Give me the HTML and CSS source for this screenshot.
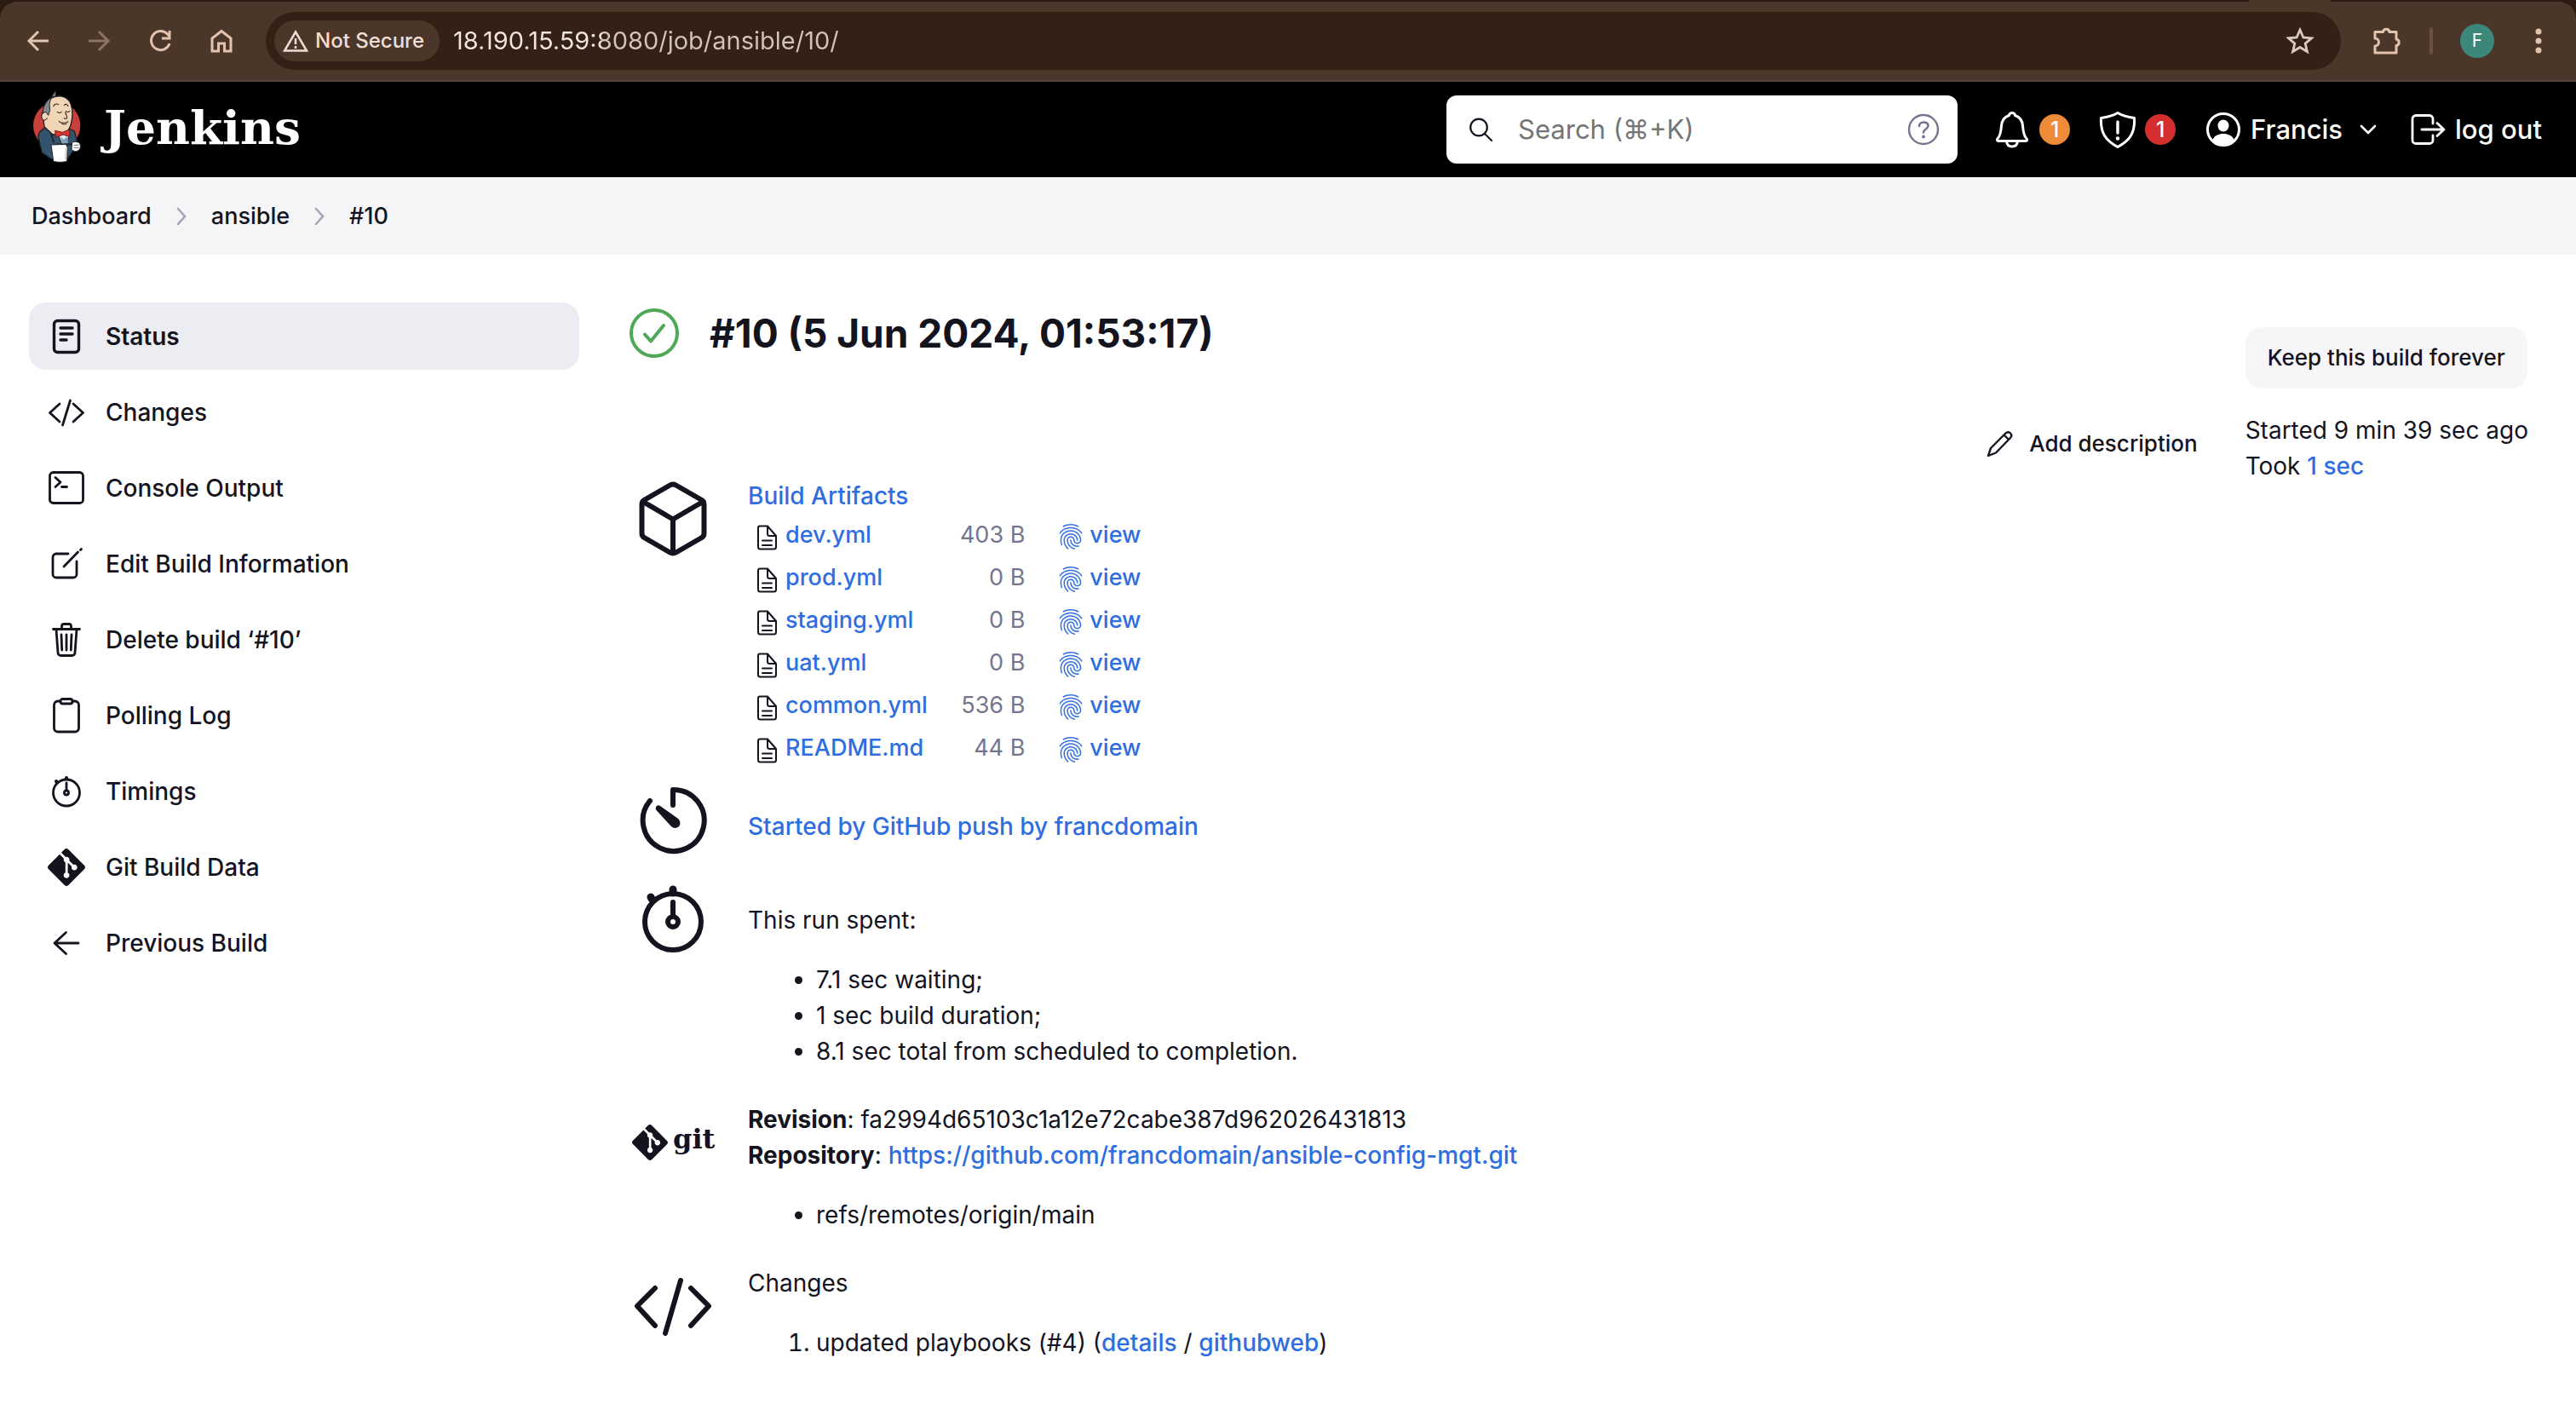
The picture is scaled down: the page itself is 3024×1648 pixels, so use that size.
FILE: index.html
```html
<!DOCTYPE html>
<html lang="en">
<head>
<meta charset="utf-8">
<title>ansible #10 [Jenkins]</title>
<link rel="stylesheet" href="styles.css">
</head>
<body>
<svg class="sprite" aria-hidden="true">
  <symbol id="i-file" viewBox="0 0 32 32"><path d="M8 2.500h9L27 14v13a2.500 2.500 0 0 1-2.500 2.500h-16A2.500 2.500 0 0 1 6 27V4.500a2 2 0 0 1 2-2zM17 3v8.500a2.500 2.500 0 0 0 2.500 2.500H27M11 19.500h11M11 25h11" fill="none" stroke="currentColor" stroke-width="2" stroke-linecap="round" stroke-linejoin="round"/></symbol>
  <symbol id="i-finger" viewBox="0 0 24 24"><path fill="currentColor" d="M17.81,4.47C17.73,4.47 17.65,4.45 17.58,4.41C15.66,3.42 14,3 12,3C10.03,3 8.15,3.47 6.44,4.41C6.2,4.54 5.9,4.45 5.76,4.21C5.63,3.97 5.72,3.66 5.96,3.53C7.82,2.5 9.86,2 12,2C14.14,2 16,2.47 18.04,3.5C18.29,3.65 18.38,3.95 18.25,4.19C18.16,4.37 18,4.47 17.81,4.47M3.5,9.72C3.4,9.72 3.3,9.69 3.21,9.63C3,9.47 2.93,9.16 3.09,8.93C4.08,7.53 5.34,6.43 6.84,5.66C10,4.04 14,4.03 17.15,5.65C18.65,6.42 19.91,7.5 20.9,8.9C21.06,9.12 21,9.44 20.78,9.6C20.55,9.76 20.24,9.71 20.08,9.5C19.18,8.22 18.04,7.23 16.69,6.54C13.82,5.07 10.15,5.07 7.29,6.55C5.93,7.25 4.79,8.25 3.89,9.5C3.81,9.65 3.66,9.72 3.5,9.72M9.75,21.79C9.62,21.79 9.5,21.74 9.4,21.64C8.53,20.77 8.06,20.21 7.39,19C6.7,17.77 6.34,16.27 6.34,14.66C6.34,11.69 8.88,9.27 12,9.27C15.12,9.27 17.66,11.69 17.66,14.66A0.5,0.5 0 0,1 17.16,15.16A0.5,0.5 0 0,1 16.66,14.66C16.66,12.24 14.57,10.27 12,10.27C9.43,10.27 7.34,12.24 7.34,14.66C7.34,16.1 7.66,17.43 8.27,18.5C8.91,19.66 9.35,20.15 10.12,20.93C10.31,21.13 10.31,21.44 10.12,21.64C10,21.74 9.88,21.79 9.75,21.79M16.92,19.94C15.73,19.94 14.68,19.64 13.82,19.05C12.33,18.04 11.44,16.4 11.44,14.66A0.5,0.5 0 0,1 11.94,14.16A0.5,0.5 0 0,1 12.44,14.66C12.44,16.07 13.16,17.4 14.38,18.22C15.09,18.7 15.92,18.93 16.92,18.93C17.16,18.93 17.56,18.9 17.96,18.83C18.23,18.78 18.5,18.96 18.54,19.24C18.59,19.5 18.41,19.77 18.13,19.82C17.56,19.93 17.06,19.94 16.92,19.94M14.91,22C14.87,22 14.82,22 14.78,22C13.19,21.54 12.15,20.95 11.06,19.88C9.66,18.5 8.89,16.64 8.89,14.66C8.89,13.04 10.27,11.72 11.97,11.72C13.67,11.72 15.05,13.04 15.05,14.66C15.05,15.73 16,16.6 17.13,16.6C18.28,16.6 19.21,15.73 19.21,14.66C19.21,10.89 15.96,7.83 11.96,7.83C9.12,7.83 6.5,9.41 5.35,11.86C4.96,12.67 4.76,13.62 4.76,14.66C4.76,15.44 4.83,16.67 5.43,18.27C5.53,18.53 5.4,18.82 5.14,18.91C4.88,19 4.59,18.87 4.5,18.62C4,17.31 3.77,16 3.77,14.66C3.77,13.46 4,12.37 4.45,11.42C5.78,8.63 8.73,6.82 11.96,6.82C16.5,6.82 20.21,10.33 20.21,14.65C20.21,16.27 18.83,17.59 17.13,17.59C15.43,17.59 14.05,16.27 14.05,14.65C14.05,13.58 13.12,12.71 11.97,12.71C10.82,12.71 9.89,13.58 9.89,14.65C9.89,16.36 10.55,17.96 11.76,19.16C12.71,20.1 13.62,20.62 15.03,21C15.3,21.08 15.45,21.36 15.38,21.62C15.33,21.85 15.12,22 14.91,22Z"/></symbol>
  <symbol id="i-git" viewBox="0 0 24 24"><path fill="currentColor" d="M23.546 10.93L13.067.452c-.604-.603-1.582-.603-2.188 0L8.708 2.627l2.76 2.76c.645-.215 1.379-.07 1.889.441.516.515.658 1.258.438 1.9l2.658 2.66c.645-.223 1.387-.078 1.9.435.721.72.721 1.884 0 2.604-.719.719-1.881.719-2.6 0-.539-.541-.674-1.337-.404-1.996L12.86 8.955v6.525c.176.086.342.203.488.348.713.721.713 1.883 0 2.6-.719.721-1.889.721-2.609 0-.719-.719-.719-1.879 0-2.598.182-.18.387-.316.605-.406V8.835c-.217-.091-.424-.222-.6-.401-.545-.545-.676-1.342-.396-2.009L7.636 3.7.45 10.881c-.6.605-.6 1.584 0 2.189l10.48 10.477c.604.604 1.582.604 2.186 0l10.43-10.43c.605-.603.605-1.582 0-2.187"/></symbol>
  <symbol id="i-code" viewBox="0 0 96 96"><path d="M27 27L6 48l21 23M69 27l21 21-21 23M57 18L39 80" fill="none" stroke="currentColor" stroke-width="6" stroke-linecap="round" stroke-linejoin="round"/></symbol>
  <symbol id="i-watch" viewBox="0 0 96 96"><g fill="none" stroke="currentColor" stroke-linecap="round"><circle cx="48" cy="51" r="33" stroke-width="6"/><circle cx="48" cy="51" r="6" stroke-width="6"/><path d="M48 44V28" stroke-width="6"/><path d="M48 17v-4M23 24l-1-2" stroke-width="9"/></g></symbol>
</svg>

<div class="browser">
  <div class="tabstrip"><span class="tab-foot"></span></div>
  <div class="toolbar">
    <div class="nav-buttons">
      <button class="tool" aria-label="Back"><svg width="30" height="30" viewBox="0 0 30 30"><path d="M27 15H4M15 4L4 15l11 11" fill="none" stroke="currentColor" stroke-width="3"/></svg></button>
      <button class="tool tool-off" aria-label="Forward"><svg width="30" height="30" viewBox="0 0 30 30"><path d="M2 15h23M14 4l11 11-11 11" fill="none" stroke="currentColor" stroke-width="3"/></svg></button>
      <button class="tool" aria-label="Reload"><svg width="30" height="30" viewBox="0 0 30 30"><path d="M25 18a11 11 0 1 1-2.500-11l3 3M25 3v9h-9" fill="none" stroke="currentColor" stroke-width="3"/></svg></button>
      <button class="tool" aria-label="Home"><svg width="30" height="30" viewBox="0 0 30 30"><path d="M3 12L14 3.500 25 12v15h-7.500v-9h-7v9H3z" fill="none" stroke="currentColor" stroke-width="3"/></svg></button>
    </div>
    <div class="omnibox">
      <button class="chip"><svg width="30" height="30" viewBox="0 0 30 30"><path d="M15 4.500L28 26.500H2z" fill="none" stroke="currentColor" stroke-width="2.500"/><path d="M15 12v7M15 21v3" stroke="currentColor" stroke-width="2.500"/></svg>Not Secure</button>
      <input class="url" type="text" aria-label="Address" value="18.190.15.59:8080/job/ansible/10/">
      <button class="star" aria-label="Bookmark"><svg width="34" height="34" viewBox="0 0 34 34"><path d="M16 4l3.900 9 9.600.8-7.300 6.300 2.200 9.400L16 24.500l-8.400 5 2.200-9.400-7.300-6.300 9.600-.8z" fill="none" stroke="currentColor" stroke-width="2.800"/></svg></button>
    </div>
    <div class="tools-right">
      <button class="tool" aria-label="Extensions"><svg width="36" height="36" viewBox="0 0 36 36"><path d="M4 7.500h9.500a3.800 3.800 0 0 1 7.500 0h8V16a3.800 3.800 0 0 1 0 7.500V32H4v-8a4.500 4.500 0 0 0 0-9z" fill="none" stroke="currentColor" stroke-width="3" stroke-linejoin="round"/></svg></button>
      <span class="divider"></span>
      <button class="avatar" aria-label="Profile">F</button>
      <button class="tool" aria-label="Menu"><svg width="8" height="36" viewBox="0 0 8 36"><g fill="currentColor"><circle cx="4" cy="7" r="3.500"/><circle cx="4" cy="18" r="3.500"/><circle cx="4" cy="29" r="3.500"/></g></svg></button>
    </div>
  </div>
</div>

<header class="page-header">
  <a class="brand" href="#">
    <svg width="70" height="96" viewBox="0 0 210 288" aria-hidden="true">
      <circle cx="92" cy="130" r="83" fill="#c9403a"/>
      <path d="M50 138L32 152 26 168l14 58 32 22h58l20-30 14-30-10-38-30-14z" fill="#33526b" stroke="#1c2024" stroke-width="4"/>
      <path d="M62 42C52 52 42 74 43 86c-6 4-6 18 2 22l3 26 30 28 48-4 14-26C150 100 148 76 142 56 134 32 108 22 88 28 76 30 68 36 62 42z" fill="#f0d6b7" stroke="#1c2024" stroke-width="4"/>
      <path d="M88 27C66 28 44 54 42 86l12-4 8 12 6-18-2-20c2-16 10-32 22-49z" fill="#85888b" stroke="#1c2024" stroke-width="3"/>
      <path d="M42 88c-6 6-4 22 6 24l12-8" fill="#f0d6b7" stroke="#1c2024" stroke-width="3"/>
      <path d="M80 62c4-8 12-10 18-6M118 58c6-6 12-2 14 4M94 82c4 4 10 4 14 0M124 80c4 4 10 3 13-1M122 84c2 8 8 16 6 20-4 4-8 2-10 0M100 116c10 6 22 6 32 0M110 124c6 3 12 2 16 0" fill="none" stroke="#3a2c22" stroke-width="3.500" stroke-linecap="round"/>
      <path d="M96 160l14 36 18-6 10-30-20-6z" fill="#dfe9f0" stroke="#1c2024" stroke-width="3"/>
      <path d="M104 168l12 12 14-12 2 24-20 4z" fill="#7d9db5"/>
      <path d="M86 148l26 6 24-10 2 26-24-8-26 10z" fill="#d33833" stroke="#7a1a18" stroke-width="3"/>
      <path d="M72 160l10 30M84 196h62" stroke="#1c2024" stroke-width="5"/>
      <path d="M146 190c8-6 26-2 28 6s2 16-6 22c-10 6-20 2-24-6z" fill="#fff" stroke="#1c2024" stroke-width="3"/>
      <path d="M152 200l18-2M152 208l18 0" stroke="#1c2024" stroke-width="2"/>
      <path d="M72 198l52-2 6 12-2 48c-14 4-34 4-48 0z" fill="#fff" stroke="#1c2024" stroke-width="3"/>
      <path d="M124 210l-2 42" stroke="#b9c0c6" stroke-width="3"/>
    </svg>
    <span class="wordmark">Jenkins</span>
  </a>
  <div class="header-tools">
    <form class="search">
      <svg width="32" height="32" viewBox="0 0 32 32"><circle cx="14" cy="13.500" r="9.800" fill="none" stroke="#14141f" stroke-width="2.200"/><path d="M21 21l8 8" stroke="#14141f" stroke-width="2.200" stroke-linecap="round"/></svg>
      <input type="search" aria-label="Search" placeholder="Search (⌘+K)">
      <a href="#" class="help" aria-label="Help"><svg width="40" height="40" viewBox="0 0 40 40"><circle cx="20" cy="20" r="17" fill="none" stroke="currentColor" stroke-width="2.400"/><path d="M15 16c0-6 10.500-6 10.500-.5 0 4-5.500 4-5.500 8" fill="none" stroke="currentColor" stroke-width="2.600" stroke-linecap="round"/><circle cx="20" cy="28.500" r="2" fill="currentColor"/></svg></a>
    </form>
    <div class="header-links">
      <a class="alert" href="#" aria-label="Notifications"><svg width="44" height="44" viewBox="0 0 44 44"><path d="M22 2.500c-2 0-3.500 1.300-3.500 3-6 2-8.500 6-9 12-.7 9-1.500 12-4 14.500-2 2-1 3.500.5 3.500h32c1.500 0 2.500-1.500.5-3.500-2.500-2.500-3.300-5.500-4-14.500-.5-6-3-10-9-12 0-1.700-1.500-3-3.500-3zM15.500 36c.5 4 3 6 6.500 6s6-2 6.500-6" fill="none" stroke="currentColor" stroke-width="3" stroke-linejoin="round"/></svg><span class="badge badge-warn">1</span></a>
      <a class="alert" href="#" aria-label="Security warnings"><svg width="44" height="44" viewBox="0 0 44 44"><path d="M22 2.500C17 5.500 10 7.500 2.500 8.500c-1 17 5 26.500 19.500 34 14.500-7.500 20.500-17 19.500-34C34 7.500 27 5.500 22 2.500z" fill="none" stroke="currentColor" stroke-width="3" stroke-linejoin="round"/><path d="M22 13v13" stroke="currentColor" stroke-width="3.400" stroke-linecap="round"/><circle cx="22" cy="32.500" r="2.200" fill="currentColor"/></svg><span class="badge badge-danger">1</span></a>
      <span class="user"><a class="alert" href="#"><svg width="44" height="44" viewBox="0 0 44 44"><circle cx="22" cy="22" r="18.500" fill="none" stroke="currentColor" stroke-width="3"/><ellipse cx="22" cy="17.500" rx="6.500" ry="7" fill="currentColor"/><path d="M9.500 34c2-5 7-7 12.500-7s10.500 2 12.500 7c-3 4-8 6.500-12.500 6.500S12.500 38 9.500 34z" fill="currentColor"/></svg>Francis</a>
      <button class="caret" aria-label="User menu"><svg width="20" height="20" viewBox="0 0 20 20"><path d="M2 6l8 8 8-8" fill="none" stroke="currentColor" stroke-width="2.600" stroke-linecap="round" stroke-linejoin="round"/></svg></button></span>
      <a class="alert" href="#"><svg width="44" height="44" viewBox="0 0 44 44"><path d="M28 15V9.500a4 4 0 0 0-4-4H8a4 4 0 0 0-4 4v25a4 4 0 0 0 4 4h16a4 4 0 0 0 4-4V29M15 22h25M33 14.500l8 7.500-8 7.500" fill="none" stroke="currentColor" stroke-width="2.800" stroke-linecap="round" stroke-linejoin="round"/></svg>log out</a>
    </div>
  </div>
</header>

<nav class="crumbs" aria-label="Breadcrumb">
  <a href="#">Dashboard</a>
  <svg width="12" height="22" viewBox="0 0 12 22"><path d="M2 2l8 9-8 9" fill="none" stroke="currentColor" stroke-width="2.600" stroke-linecap="round"/></svg>
  <a href="#">ansible</a>
  <svg width="12" height="22" viewBox="0 0 12 22"><path d="M2 2l8 9-8 9" fill="none" stroke="currentColor" stroke-width="2.600" stroke-linecap="round"/></svg>
  <a href="#">#10</a>
</nav>

<div class="page-body">
  <nav class="tasks" aria-label="Build">
    <a class="task task-active" href="#"><svg viewBox="0 0 44 44"><g fill="none" stroke="currentColor" stroke-width="3.400" stroke-linecap="round"><rect x="7.500" y="3.500" width="29" height="37" rx="4"/><path d="M15 12h14M15 19h14M15 26h7"/></g></svg>Status</a>
    <a class="task" href="#"><svg viewBox="0 0 44 44"><path d="M14 12L2.500 22.500 14 33M30 12l11.500 10.500L30 33M26.500 8l-9 29" fill="none" stroke="currentColor" stroke-width="2.800" stroke-linecap="round" stroke-linejoin="round"/></svg>Changes</a>
    <a class="task" href="#"><svg viewBox="0 0 44 44"><g fill="none" stroke="currentColor" stroke-width="2.800" stroke-linecap="round" stroke-linejoin="round"><rect x="2.500" y="3.500" width="39" height="36" rx="4"/><path d="M9 9.500l6 5.500-6 5.500M16.500 20.500h6"/></g></svg>Console Output</a>
    <a class="task" href="#"><svg viewBox="0 0 44 44"><g fill="none" stroke="currentColor" stroke-width="2.800" stroke-linecap="round" stroke-linejoin="round"><path d="M24 10H10a4 4 0 0 0-4 4v20a4 4 0 0 0 4 4h20a4 4 0 0 0 4-4V19M19 25L35.500 8"/><path d="M38.500 5.500l1-1"/></g></svg>Edit Build Information</a>
    <a class="task" href="#"><svg viewBox="0 0 44 44"><g fill="none" stroke="currentColor" stroke-width="2.800" stroke-linecap="round" stroke-linejoin="round"><path d="M6.500 9.500h31M10 10l2 27a3.500 3.500 0 0 0 3.500 3.500h13A3.500 3.500 0 0 0 32 37l2-27M16.500 9V6a2.500 2.500 0 0 1 2.500-2.500h6A2.500 2.500 0 0 1 27.500 6v3M22 16v18M16 16l.7 18M28 16l-.7 18"/></g></svg>Delete build ‘#10’</a>
    <a class="task" href="#"><svg viewBox="0 0 44 44"><g fill="none" stroke="currentColor" stroke-width="2.800" stroke-linecap="round" stroke-linejoin="round"><path d="M15 5h-3a4.500 4.500 0 0 0-4.500 4.500v27A4.500 4.500 0 0 0 12 41h20a4.500 4.500 0 0 0 4.500-4.500v-27A4.500 4.500 0 0 0 32 5h-3"/><rect x="15" y="2.500" width="14" height="5.500" rx="2.500"/></g></svg>Polling Log</a>
    <a class="task" href="#"><svg viewBox="0 0 44 44"><g fill="none" stroke="currentColor" stroke-width="2.800" stroke-linecap="round"><circle cx="22" cy="23.500" r="15.500"/><circle cx="22" cy="23.500" r="2.500"/><path d="M22 20v-8"/><path d="M22 7V6M10.500 11l-.5-1" stroke-width="4"/></g></svg>Timings</a>
    <a class="task" href="#"><svg viewBox="0 0 44 44"><use href="#i-git"/></svg>Git Build Data</a>
    <a class="task" href="#"><svg viewBox="0 0 44 44"><path d="M21.500 9.500L8 22l13.500 12.500M8.500 22H36" fill="none" stroke="currentColor" stroke-width="2.800" stroke-linecap="round" stroke-linejoin="round"/></svg>Previous Build</a>
  </nav>

  <main class="content">
    <section class="summary">
      <h1><svg width="58" height="58" viewBox="0 0 58 58" aria-label="Success"><circle cx="29" cy="29" r="27" fill="none" stroke="#4fa856" stroke-width="4"/><path d="M18 30.500l7 8L40 20" fill="none" stroke="#4fa856" stroke-width="4" stroke-linecap="round" stroke-linejoin="round"/></svg>#10 (5 Jun 2024, 01:53:17)</h1>

      <div class="row">
        <svg class="row-icon" viewBox="0 0 96 96"><path d="M44.500 8.500L15 25.500a6 6 0 0 0-3.500 5.500v34a6 6 0 0 0 3.500 5.500l29.500 17a7 7 0 0 0 7 0l29.500-17a6 6 0 0 0 3.500-5.500V31a6 6 0 0 0-3.500-5.500l-29.500-17a7 7 0 0 0-7 0zM13 28l35 20.500L83 28M48 48.500V87" fill="none" stroke="currentColor" stroke-width="6" stroke-linejoin="round"/></svg>
        <div>
          <a href="#">Build Artifacts</a>
          <table class="files">
            <tr><td><svg class="file-icon"><use href="#i-file"/></svg></td><td><a href="#">dev.yml</a></td><td class="size">403 B</td><td><a class="view" href="#"><svg><use href="#i-finger"/></svg>view</a></td></tr>
            <tr><td><svg class="file-icon"><use href="#i-file"/></svg></td><td><a href="#">prod.yml</a></td><td class="size">0 B</td><td><a class="view" href="#"><svg><use href="#i-finger"/></svg>view</a></td></tr>
            <tr><td><svg class="file-icon"><use href="#i-file"/></svg></td><td><a href="#">staging.yml</a></td><td class="size">0 B</td><td><a class="view" href="#"><svg><use href="#i-finger"/></svg>view</a></td></tr>
            <tr><td><svg class="file-icon"><use href="#i-file"/></svg></td><td><a href="#">uat.yml</a></td><td class="size">0 B</td><td><a class="view" href="#"><svg><use href="#i-finger"/></svg>view</a></td></tr>
            <tr><td><svg class="file-icon"><use href="#i-file"/></svg></td><td><a href="#">common.yml</a></td><td class="size">536 B</td><td><a class="view" href="#"><svg><use href="#i-finger"/></svg>view</a></td></tr>
            <tr><td><svg class="file-icon"><use href="#i-file"/></svg></td><td><a href="#">README.md</a></td><td class="size">44 B</td><td><a class="view" href="#"><svg><use href="#i-finger"/></svg>view</a></td></tr>
          </table>
        </div>
      </div>

      <div class="row">
        <svg class="row-icon" viewBox="0 0 96 96"><path d="M21 25A36 36 0 1 0 48 12v18" fill="none" stroke="currentColor" stroke-width="6" stroke-linecap="round" stroke-linejoin="round"/><path d="M28 32.500c1-2.500 3-3 5-1.500l20.500 14.500c4 3.500 3.500 8 1 10s-6.500 2-9-1L28.500 36c-.8-1-1-2-.5-3.500z" fill="currentColor"/></svg>
        <p class="cause"><a href="#">Started by GitHub push by francdomain</a></p>
      </div>

      <div class="row">
        <svg class="row-icon"><use href="#i-watch"/></svg>
        <div>
          <p>This run spent:</p>
          <ul>
            <li>7.1 sec waiting;</li>
            <li>1 sec build duration;</li>
            <li>8.1 sec total from scheduled to completion.</li>
          </ul>
        </div>
      </div>

      <div class="row">
        <div class="row-icon git-logo"><svg width="42" height="42"><use href="#i-git"/></svg><span>git</span></div>
        <div>
          <b>Revision</b>: fa2994d65103c1a12e72cabe387d962026431813<br>
          <b>Repository</b>: <a href="#">https://github.com/francdomain/ansible-config-mgt.git</a>
          <ul>
            <li>refs/remotes/origin/main</li>
          </ul>
        </div>
      </div>

      <div class="row">
        <svg class="row-icon"><use href="#i-code"/></svg>
        <div>
          Changes
          <ol>
            <li>updated playbooks (#4) (<a href="#">details</a> / <a href="#">githubweb</a>)</li>
          </ol>
        </div>
      </div>
    </section>

    <aside class="build-info">
      <a class="describe" href="#"><svg width="32" height="32" viewBox="0 0 32 32"><path d="M2 30l3-9L22 4c2-2 4-2.500 6-.5s1.500 4-.5 6L11 26.500zM20.500 5.500l6 6" fill="none" stroke="currentColor" stroke-width="2.400" stroke-linejoin="round"/></svg>Add description</a>
      <div>
        <button class="keep">Keep this build forever</button>
        <div>Started 9 min 39 sec ago</div>
        <div>Took <a href="#">1 sec</a></div>
      </div>
    </aside>
  </main>
</div>
</body>
</html>
```
FILE: styles.css
```css
:root {
  --text: #14141f;
  --link: #2f6ee0;
  --muted: #75758f;
}

* { box-sizing: border-box; }

body {
  margin: 0;
  background: #fff;
  color: var(--text);
  font: 400 28px/42px Inter, "Liberation Sans", sans-serif;
}

button {
  border: 0;
  padding: 0;
  background: none;
  color: inherit;
  font: inherit;
}

input { font: inherit; }
a { color: var(--link); font-weight: 500; text-decoration: none; }
svg { display: block; flex: none; }
p { margin: 28px 0; }
.sprite { position: absolute; width: 0; height: 0; }

/* Browser toolbar */
.browser { background: #2b1a10; border-bottom: 2px solid #54443c; }
.tabstrip { display: flex; justify-content: flex-end; height: 2px; }
.tab-foot { width: 96px; margin-right: 288px; background: #4a372a; }

.toolbar {
  display: flex;
  align-items: center;
  height: 92px;
  padding: 0 40px 0 30px;
  background: #4a372a;
  border-radius: 20px 20px 0 0;
  color: #e3c3ad;
}

.nav-buttons { display: flex; gap: 42px; margin-right: 36px; }
.tool-off { color: #8b7466; }

.omnibox {
  display: flex;
  flex: 1;
  align-items: center;
  height: 68px;
  padding: 0 30px 0 10px;
  border-radius: 34px;
  background: #332115;
  color: #d9c9c0;
}

.chip {
  display: flex;
  align-items: center;
  gap: 8px;
  height: 48px;
  padding: 0 18px 0 10px;
  border-radius: 24px;
  background: #4a372a;
  color: #f0ded4;
  font-size: 24px;
  font-weight: 500;
}

.url {
  flex: 1;
  min-width: 0;
  margin-left: 16px;
  padding: 0;
  border: 0;
  outline: 0;
  background: linear-gradient(90deg, #f5e6dd 174px, #d3c3b9 174px) text;
  color: transparent;
  font-size: 29px;
}

.tools-right { display: flex; align-items: center; margin-left: 36px; }
.divider { width: 4px; height: 32px; margin: 0 32px; border-radius: 2px; background: #6a5042; }

.avatar {
  width: 40px;
  height: 40px;
  margin-right: 48px;
  border-radius: 50%;
  background: #3b877a;
  color: #fff;
  font-size: 21px;
  line-height: 40px;
}

/* Jenkins header */
.page-header {
  display: flex;
  align-items: center;
  justify-content: space-between;
  height: 112px;
  padding: 0 40px 0 36px;
  background: #000;
}

.brand { display: flex; align-items: center; gap: 16px; color: #fff; }

.wordmark {
  padding-bottom: 4px;
  font: 700 55px/64px "DejaVu Serif", serif;
}

.header-tools { display: flex; align-items: center; gap: 42px; }

.search {
  display: flex;
  align-items: center;
  gap: 28px;
  width: 600px;
  height: 80px;
  padding: 0 20px 0 24px;
  border-radius: 12px;
  background: #fff;
}

.search input {
  flex: 1;
  min-width: 0;
  padding: 0;
  border: 0;
  outline: 0;
  background: none;
  font-size: 31px;
}

.search input::placeholder { color: #757575; }
.help { color: var(--muted); }

.header-links { display: flex; align-items: center; gap: 34px; font-size: 31px; }
.alert { display: flex; align-items: center; gap: 10px; color: #fff; }
.user { display: flex; align-items: center; gap: 20px; padding-right: 4px; color: #fff; }

.badge {
  width: 36px;
  height: 36px;
  border-radius: 50%;
  font-size: 25px;
  line-height: 36px;
  text-align: center;
}

.badge-warn { background: #ee8b38; }
.badge-danger { background: #d42e2e; }

.crumbs {
  display: flex;
  align-items: center;
  gap: 29px;
  height: 91px;
  padding: 0 37px;
  background: #f5f5f8;
  color: #a5a5b8;
  font-size: 27px;
}

.crumbs a { color: var(--text); }

/* Side navigation */
.page-body {
  display: grid;
  grid-template-columns: 646px minmax(0, 1fr);
  gap: 59px;
  padding: 56px 56px 56px 34px;
}

.tasks { display: flex; flex-direction: column; gap: 10px; }

.task {
  display: flex;
  align-items: center;
  gap: 24px;
  height: 79px;
  padding: 0 22px;
  border-radius: 20px;
  color: var(--text);
}

.task svg { width: 44px; height: 44px; }
.task-active { background: #ecedf3; font-weight: 600; }

/* Build summary */
.content { display: flex; align-items: flex-start; justify-content: space-between; }

h1 {
  display: flex;
  align-items: center;
  gap: 36px;
  height: 72px;
  margin: 0 0 134px;
  font-size: 46px;
  font-weight: 700;
}

.row { display: flex; gap: 40px; min-height: 104px; margin-bottom: 12px; padding-left: 3px; }
.row-icon { flex: none; width: 96px; height: 96px; }
.row ul, .row ol { margin: 28px 0 26px; padding-left: 80px; }
.cause { margin: 34px 0 28px; }

.files { border-spacing: 0; font-size: 27px; }
.files td { height: 50px; padding: 0; }
.files td:first-child { padding-left: 6px; }
.file-icon { width: 32px; height: 32px; margin: 6px 6px 0 0; }
.files .size { padding: 0 36px 0 38px; color: var(--muted); text-align: right; }
.view { display: flex; align-items: center; gap: 4px; }
.view svg { width: 36px; height: 36px; margin-top: 4px; }

.git-logo { display: flex; align-items: center; gap: 6px; }
.git-logo span { padding-bottom: 8px; font: 700 32px/40px "DejaVu Serif", serif; }

.build-info { display: flex; gap: 56px; padding-top: 29px; }

.describe {
  display: flex;
  align-items: center;
  align-self: flex-end;
  gap: 18px;
  height: 94px;
  color: var(--text);
  font-size: 26px;
}

.keep {
  display: block;
  height: 72px;
  margin-bottom: 28px;
  padding: 0 26px;
  border-radius: 20px;
  background: #f6f6f9;
  font-size: 26px;
  font-weight: 500;
}
```
